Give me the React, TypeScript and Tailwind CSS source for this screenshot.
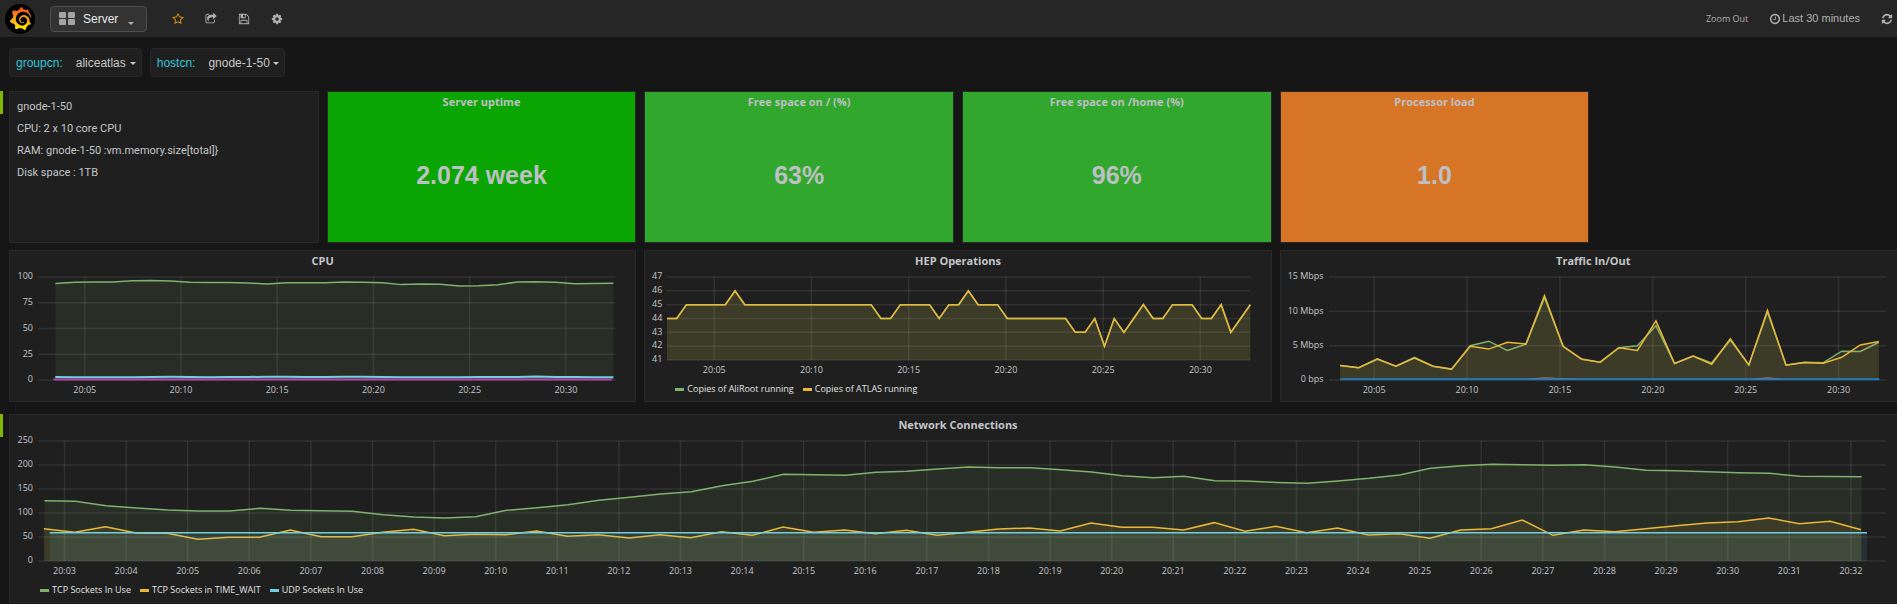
import type { ReactNode } from "react";
import { SiGrafana } from "react-icons/si";

type Series = {
  name?: string;
  color: string;
  start: number;
  step: number;
  values: number[];
  width: number;
};

// Visible time window, in minutes after 20:00.
const FROM = 2.57;
const TO = 32.57;

const GREEN = "#7eb26d";
const YELLOW = "#eab839";
const CYAN = "#6ed0e0";

const repeat = (value: number, count: number) => Array.from({ length: count }, () => value);
const clock = (minute: number) => `20:${String(minute).padStart(2, "0")}`;
const timeX = (minute: number) => ((minute - FROM) / (TO - FROM)) * 100;

const everyFive = [5, 10, 15, 20, 25, 30];
const everyMinute = Array.from({ length: 30 }, (_, i) => i + 3);

const cpuSeries: Series[] = [
  {
    color: GREEN, start: 3.47, step: 1, width: 1.5,
    values: [93.7, 95, 95.1, 95.2, 96.4, 96.6, 96, 94.8, 94.7, 94.6, 94.2, 93.1, 94.4, 94.4, 94.5, 95.2, 95, 94.5, 92.6, 93.2, 92.9, 91.2, 91.4, 92.4, 95.1, 95.5, 95, 93.5, 93.8, 93.9],
  },
  {
    color: CYAN, start: 3.47, step: 1, width: 2,
    values: [2.9, 2.7, 2.7, 2.7, 2.7, 3, 3.1, 3, 2.7, 2.8, 3, 3.1, 3.1, 2.8, 2.8, 3.1, 3.1, 3, 2.7, 2.7, 2.7, 2.7, 3, 3, 3, 3.4, 3, 3, 2.7, 2.7],
  },
  { color: "#ba43a9", start: 3.37, step: 1, width: 2, values: repeat(0.6, 30) },
];

const hepValues = [
  44, 44, 45, 45, 45, 45, 45, 46, 45, 45, 45, 45, 45, 45, 45, 45, 45, 45, 45, 45, 45, 45, 44, 44, 45, 45, 45, 45, 44, 45,
  45, 46, 45, 45, 45, 44, 44, 44, 44, 44, 44, 44, 43, 43, 44, 42, 44, 43, 44, 45, 44, 44, 45, 45, 45, 44, 44, 45, 43, 44, 45,
];
const hepSeries: Series[] = [
  { name: "Copies of AliRoot running", color: GREEN, start: FROM, step: 0.5, width: 1.5, values: hepValues },
  { name: "Copies of ATLAS running", color: YELLOW, start: FROM, step: 0.5, width: 1.5, values: hepValues },
];

const trafficSeries: Series[] = [
  {
    color: GREEN, start: 3.17, step: 1, width: 1.5,
    values: [2.1, 1.8, 3, 2, 3.3, 2, 1.55, 5, 5.65, 4.3, 5.2, 12, 4.9, 3, 2.6, 4.7, 5, 7.9, 2.4, 3.5, 2.5, 5.8, 2.2, 9.9, 2.2, 2.6, 2.5, 4.2, 4.15, 5.5],
  },
  {
    color: YELLOW, start: 3.17, step: 1, width: 1.5,
    values: [2.1, 1.8, 3.1, 2, 3.2, 2, 1.6, 4.9, 4.5, 5.5, 5.25, 12.3, 4.9, 3.05, 2.6, 4.7, 4.3, 8.6, 2.4, 3.5, 2.3, 6, 2.2, 10.15, 2.15, 2.55, 2.45, 3.3, 5.1, 5.6],
  },
  {
    color: "#ef843c", start: 3.17, step: 1, width: 1,
    values: [...repeat(0.1, 10), 0.12, 0.3, 0.2, ...repeat(0.1, 10), 0.3, ...repeat(0.1, 6)],
  },
  { color: "#1f78c1", start: 3.2, step: 1, width: 2, values: repeat(0.1, 30) },
];

const networkSeries: Series[] = [
  {
    name: "TCP Sockets In Use", color: GREEN, start: 2.675, step: 0.5, width: 1.5,
    values: [
      125.7, 124.7, 115, 110.4, 106.4, 104.4, 104.2, 109.7, 105.6, 104.9, 103.5, 96.5, 91.7, 89.6, 92.4, 105.6, 111, 117.4, 126.4, 132.6,
      139.6, 144.4, 157, 166, 180.6, 179.9, 178.5, 184.7, 186.8, 191.7, 195.8, 194.4, 194.4, 190.3, 185.4, 177.8, 173.6, 176.4, 167.4, 166.7,
      163.7, 161.8, 166.7, 172.2, 179.2, 193, 198.6, 201.4, 200.7, 199.3, 200.7, 195.8, 188.9, 188.2, 186.1, 184, 182.6, 176.6, 175.9, 175.7,
    ],
  },
  {
    name: "TCP Sockets in TIME_WAIT", color: YELLOW, start: 2.665, step: 0.5, width: 1.5,
    values: [
      67.4, 59.7, 71.5, 58.3, 57.6, 45.1, 49.3, 49.3, 64.6, 50.7, 50.7, 60, 66, 52.4, 55.6, 54.9, 62.5, 51.4, 54.9, 48,
      54.9, 48.6, 61, 53.5, 70.8, 59.7, 64.6, 56.9, 63.9, 53.5, 60, 66.7, 68.8, 62.5, 79.2, 70.5, 70.1, 64.6, 79.9, 61.8,
      72.2, 59, 68.8, 54.2, 57, 47.2, 64.6, 67.4, 85.4, 53.5, 64.6, 61, 67.4, 73.6, 79, 81.6, 89.6, 77.8, 82.6, 65.3,
    ],
  },
  { name: "UDP Sockets In Use", color: CYAN, start: 2.76, step: 0.5, width: 1.5, values: repeat(58.8, 60) },
];

function Panel({ title, children }: { title: string; children: ReactNode }) {
  return (
    <article className="flex min-w-0 flex-col border border-[#282828] bg-[#1f1f1f]">
      <h2 className="h-[26px] text-center font-['Open_Sans',sans-serif] text-[11px] leading-[20px] font-bold text-[#c4c6c9]">
        {title}
      </h2>
      {children}
    </article>
  );
}

function Plot({ series, min, max, lines, ticks }: { series: Series[]; min: number; max: number; lines: number; ticks: number[] }) {
  return (
    <svg className="size-full overflow-visible" aria-hidden="true">
      <g stroke="#c8c8c8" strokeOpacity="0.11" strokeWidth="1.5">
        {Array.from({ length: lines }, (_, i) => {
          const y = `${(i / (lines - 1)) * 100}%`;
          return <line key={i} x1="0%" x2="100%" y1={y} y2={y} />;
        })}
        {ticks.map((t) => (
          <line key={t} x1={`${timeX(t)}%`} x2={`${timeX(t)}%`} y1="0%" y2="100%" />
        ))}
      </g>
      <svg viewBox="0 0 100 100" width="100%" height="100%" preserveAspectRatio="none" className="overflow-visible">
        {series.map((s, n) => {
          const points = s.values.map((v, i) => `${timeX(s.start + i * s.step)},${100 - ((v - min) / (max - min)) * 100}`);
          const last = timeX(s.start + (s.values.length - 1) * s.step);
          return (
            <g key={n}>
              <polygon points={`${timeX(s.start)},100 ${points.join(" ")} ${last},100`} fill={s.color} fillOpacity="0.1" />
              <polyline points={points.join(" ")} fill="none" stroke={s.color} strokeWidth={s.width} vectorEffect="non-scaling-stroke" />
            </g>
          );
        })}
      </svg>
    </svg>
  );
}

type ChartProps = {
  title: string;
  series: Series[];
  labels: string[];
  min: number;
  max: number;
  ticks: number[];
  columns: string;
  plotHeight: string;
  legend?: boolean;
};

function Chart({ title, series, labels, min, max, ticks, columns, plotHeight, legend }: ChartProps) {
  return (
    <Panel title={title}>
      <div className={`grid pr-[20px] font-['Open_Sans',sans-serif] text-[9px] text-[#c4c6c9] ${columns}`}>
        <div className="-mt-px flex flex-col justify-between pr-[5px] pb-px text-right">
          {labels.map((label) => (
            <span key={label} className="flex h-0 items-center justify-end whitespace-nowrap">
              {label}
            </span>
          ))}
        </div>
        <div className={plotHeight}>
          <Plot series={series} min={min} max={max} lines={labels.length} ticks={ticks} />
        </div>
        <svg className="col-start-2 h-[20px] w-full overflow-visible">
          {ticks.map((t) => (
            <text key={t} x={`${timeX(t)}%`} y="13" textAnchor="middle" fill="#c4c6c9">
              {clock(t)}
            </text>
          ))}
        </svg>
      </div>
      {legend && (
        <ul className="flex h-[21px] items-center gap-[9px] pb-[3px] pl-[30px] font-['Open_Sans',sans-serif] text-[9px] text-[#e3e3e3]">
          {series.map((s) => (
            <li key={s.name} className="flex items-center gap-[3px]">
              <i className="h-[3px] w-[9px]" style={{ backgroundColor: s.color }} />
              {s.name}
            </li>
          ))}
        </ul>
      )}
    </Panel>
  );
}

function Stat({ title, value, color }: { title: string; value: string; color: string }) {
  return (
    <article className={`flex flex-col border border-[#282828] text-center font-bold text-[#bdc0c4] ${color}`}>
      <h2 className="font-['Open_Sans',sans-serif] text-[11px] leading-[20px]">{title}</h2>
      <p className="flex flex-1 items-center justify-center pb-[2px] text-[25px]">{value}</p>
    </article>
  );
}

function Row({ children }: { children: ReactNode }) {
  return (
    <section className="-mr-[10px] flex gap-[6px]">
      <span className="h-[23px] w-[3px] shrink-0 bg-[#7eb600]" />
      <div className="flex min-w-0 flex-1 flex-col gap-[7px]">{children}</div>
    </section>
  );
}

function Variable({ name, value }: { name: string; value: string }) {
  return (
    <label className="flex h-[29px] items-center rounded-sm border border-[#282828] bg-[#1f1f1f] pr-[5px] pl-[6px] text-[#c8c8c8]">
      <span className="mr-[13px] text-[#33c5d9]">{name}:</span>
      <select className="appearance-none bg-transparent">
        <option>{value}</option>
      </select>
      <Caret className="mt-[2px] ml-[3px] w-[6px]" />
    </label>
  );
}

function Caret({ className }: { className: string }) {
  return (
    <svg viewBox="0 0 6 3" className={className} fill="currentColor" aria-hidden="true">
      <path d="M0 0h6L3 3z" />
    </svg>
  );
}

function Icon({ d, className = "size-[12px]" }: { d: string; className?: string }) {
  return (
    <svg viewBox="0 0 1792 1792" className={className} fill="currentColor" aria-hidden="true">
      <path d={d} />
    </svg>
  );
}

const STAR = "M1201 1004l306-297-422-62-189-382-189 382-422 62 306 297-73 421 378-199 377 199zm527-357q0 22-26 48l-363 354 86 500q1 7 1 20 0 50-41 50-19 0-40-12l-449-236-449 236q-22 12-40 12-21 0-31.5-14.5t-10.5-35.5q0-6 2-20l86-500-364-354q-25-27-25-48 0-37 56-46l502-73 225-455q19-41 49-41t49 41l225 455 502 73q56 9 56 46z";
const SHARE = "M1472 989v259q0 119-84.5 203.5t-203.5 84.5h-832q-119 0-203.5-84.5t-84.5-203.5v-832q0-119 84.5-203.5t203.5-84.5h255q13 0 22.5 9.5t9.5 22.5q0 27-26 32-77 26-133 60-10 4-16 4h-112q-66 0-113 47t-47 113v832q0 66 47 113t113 47h832q66 0 113-47t47-113v-214q0-19 18-29 28-13 54-37 16-16 35-8 21 9 21 29zm237-496l-384 384q-18 19-45 19-12 0-25-5-39-17-39-59v-192h-160q-323 0-438 131-119 137-74 473 3 23-20 34-8 2-12 2-16 0-26-13-10-14-21-31t-39.5-68.5-49.5-99.5-38.5-114-17.5-122q0-49 3.5-91t14-90 28-88 47-81.5 68.5-74 94.5-61.5 124.5-48.5 159.5-30.5 196.5-11h160v-192q0-42 39-59 13-5 25-5 26 0 45 19l384 384q19 19 19 45t-19 45z";
const SAVE = "M512 1536h768v-384h-768v384zm896 0h128v-896q0-14-10-38.5t-20-34.5l-281-281q-10-10-34-20t-39-10v416q0 40-28 68t-68 28h-576q-40 0-68-28t-28-68v-416h-128v1280h128v-416q0-40 28-68t68-28h832q40 0 68 28t28 68v416zm-384-928v-320q0-13-9.5-22.5t-22.5-9.5h-192q-13 0-22.5 9.5t-9.5 22.5v320q0 13 9.5 22.5t22.5 9.5h192q13 0 22.5-9.5t9.5-22.5zm640 32v928q0 40-28 68t-68 28h-1344q-40 0-68-28t-28-68v-1344q0-40 28-68t68-28h928q40 0 88 20t76 48l280 280q28 28 48 76t20 88z";
const COG = "M1152 896q0-106-75-181t-181-75-181 75-75 181 75 181 181 75 181-75 75-181zm512-109v222q0 12-8 23t-20 13l-185 28q-19 54-39 91 35 50 107 138 10 12 10 25t-9 23q-27 37-99 108t-94 71q-12 0-26-9l-138-108q-44 23-91 38-16 136-29 186-7 28-36 28h-222q-14 0-24.5-8.5t-11.5-21.5l-28-184q-49-16-90-37l-141 107q-10 9-25 9-14 0-25-11-126-114-165-168-7-10-7-23 0-12 8-23 15-21 51-66.5t54-70.5q-27-50-41-99l-183-27q-13-2-21-12.5t-8-23.5v-222q0-12 8-23t19-13l186-28q14-46 39-92-40-57-107-138-10-12-10-24 0-10 9-23 26-36 98.5-107.5t94.5-71.5q13 0 26 10l138 107q44-23 91-38 16-136 29-186 7-28 36-28h222q14 0 24.5 8.5t11.5 21.5l28 184q49 16 90 37l142-107q9-9 24-9 13 0 25 10 129 119 165 170 7 8 7 22 0 12-8 23-15 21-51 66.5t-54 70.5q26 50 41 98l183 28q13 2 21 12.5t8 23.5z";
const CLOCK = "M1024 544v448q0 14-9 23t-23 9h-320q-14 0-23-9t-9-23v-64q0-14 9-23t23-9h224v-352q0-14 9-23t23-9h64q14 0 23 9t9 23zm416 352q0-148-73-273t-198-198-273-73-273 73-198 198-73 273 73 273 198 198 273 73 273-73 198-198 73-273zm224 0q0 209-103 385.5t-279.5 279.5-385.5 103-385.5-103-279.5-279.5-103-385.5 103-385.5 279.5-279.5 385.5-103 385.5 103 279.5 279.5 103 385.5z";
const REFRESH = "M1639 1056q0 5-1 7-64 268-268 434.5t-478 166.5q-146 0-282.5-55t-243.5-157l-129 129q-19 19-45 19t-45-19-19-45v-448q0-26 19-45t45-19h448q26 0 45 19t19 45-19 45l-137 137q71 66 161 102t187 36q134 0 250-65t186-179q11-17 53-117 8-23 30-23h192q13 0 22.5 9.5t9.5 22.5zm25-800v448q0 26-19 45t-45 19h-448q-26 0-45-19t-19-45 19-45l138-138q-148-137-349-137-134 0-250 65t-186 179q-11 17-53 117-8 23-30 23h-199q-13 0-22.5-9.5t-9.5-22.5v-7q65-268 270-434.5t480-166.5q146 0 284 55.5t245 156.5l130-129q19-19 45-19t45 19 19 45z";

function Navbar() {
  return (
    <header className="flex h-[37px] items-center bg-[#262626] pr-[4px] pl-[5px] text-[#b0b0b0]">
      <a href="#" aria-label="Grafana" className="flex size-[30px] items-center justify-center rounded-full bg-black">
        <svg width="0" height="0" className="absolute" aria-hidden="true">
          <linearGradient id="flame" x1="0" y1="0" x2="0" y2="1">
            <stop offset="0" stopColor="#f04a1c" />
            <stop offset="0.5" stopColor="#f9a11b" />
            <stop offset="1" stopColor="#fff100" />
          </linearGradient>
        </svg>
        <SiGrafana className="size-[23px] fill-[url(#flame)]" />
      </a>
      <button className="ml-[15px] flex h-[26px] items-center rounded-sm border border-[#4e4e4e] bg-[#333333] pr-[12px] pl-[8px] text-[12px] text-[#e8e8e8]">
        <svg viewBox="0 0 16 13" className="h-[13px] w-[16px] text-[#a3a3a3]" fill="currentColor" aria-hidden="true">
          <rect width="7" height="6" rx="1" />
          <rect x="9" width="7" height="6" rx="1" />
          <rect y="7" width="7" height="6" rx="1" />
          <rect x="9" y="7" width="7" height="6" rx="1" />
        </svg>
        <span className="mr-[10px] ml-[8px]">Server</span>
        <Caret className="mt-[9px] w-[6px] text-[#b0b0b0]" />
      </button>
      <nav className="ml-[25px] flex gap-[21px]">
        <button aria-label="Mark as favorite" className="text-[#eb9a0e]"><Icon d={STAR} /></button>
        <button aria-label="Share dashboard"><Icon d={SHARE} /></button>
        <button aria-label="Save dashboard"><Icon d={SAVE} /></button>
        <button aria-label="Settings"><Icon d={COG} /></button>
      </nav>
      <div className="ml-auto flex items-center">
        <button className="font-['Open_Sans',sans-serif] text-[9px]">Zoom Out</button>
        <button className="ml-[21px] flex items-center gap-px text-[11px]">
          <Icon d={CLOCK} />
          Last 30 minutes
        </button>
        <button aria-label="Refresh" className="ml-[21px]"><Icon d={REFRESH} /></button>
      </div>
    </header>
  );
}

export default function App() {
  return (
    <div className="min-h-screen overflow-hidden bg-[#161616] font-['Liberation_Sans',Arial,sans-serif]">
      <Navbar />
      <div className="flex gap-[8px] py-[11px] pl-[9px] text-[12px]">
        <Variable name="groupcn" value="aliceatlas" />
        <Variable name="hostcn" value="gnode-1-50" />
      </div>
      <main className="mt-[3px] flex flex-col gap-[12px]">
        <Row>
          <div className="grid h-[152px] grid-cols-6 gap-[8px]">
            <article className="border border-[#282828] bg-[#1f1f1f] pt-[4px] pl-[7px] font-['Roboto',sans-serif] text-[11px] leading-[22px] text-[#c4c6c9]">
              <p>gnode-1-50</p>
              <p>CPU: 2 x 10 core CPU</p>
              <p>{"RAM: gnode-1-50 :vm.memory.size[total]}"}</p>
              <p>Disk space : 1TB</p>
            </article>
            <Stat title="Server uptime" value="2.074 week" color="bg-[#0aa503]" />
            <Stat title="Free space on / (%)" value="63%" color="bg-[#32a72d]" />
            <Stat title="Free space on /home (%)" value="96%" color="bg-[#32a72d]" />
            <Stat title="Processor load" value="1.0" color="bg-[#d77526]" />
          </div>
          <div className="grid grid-cols-3 gap-[8px]">
            <Chart
              title="CPU" series={cpuSeries} labels={["100", "75", "50", "25", "0"]} min={0} max={100}
              ticks={everyFive} columns="grid-cols-[28px_1fr]" plotHeight="h-[103px]"
            />
            <Chart
              title="HEP Operations" series={hepSeries} labels={["47", "46", "45", "44", "43", "42", "41"]} min={41} max={47}
              ticks={everyFive} columns="grid-cols-[22px_1fr]" plotHeight="h-[83px]" legend
            />
            <Chart
              title="Traffic In/Out" series={trafficSeries} labels={["15 Mbps", "10 Mbps", "5 Mbps", "0 bps"]} min={0} max={15}
              ticks={everyFive} columns="grid-cols-[48px_1fr]" plotHeight="h-[103px]"
            />
          </div>
        </Row>
        <Row>
          <Chart
            title="Network Connections" series={networkSeries} labels={["250", "200", "150", "100", "50", "0"]} min={0} max={250}
            ticks={everyMinute} columns="grid-cols-[28px_1fr]" plotHeight="h-[120px]" legend
          />
        </Row>
      </main>
    </div>
  );
}
